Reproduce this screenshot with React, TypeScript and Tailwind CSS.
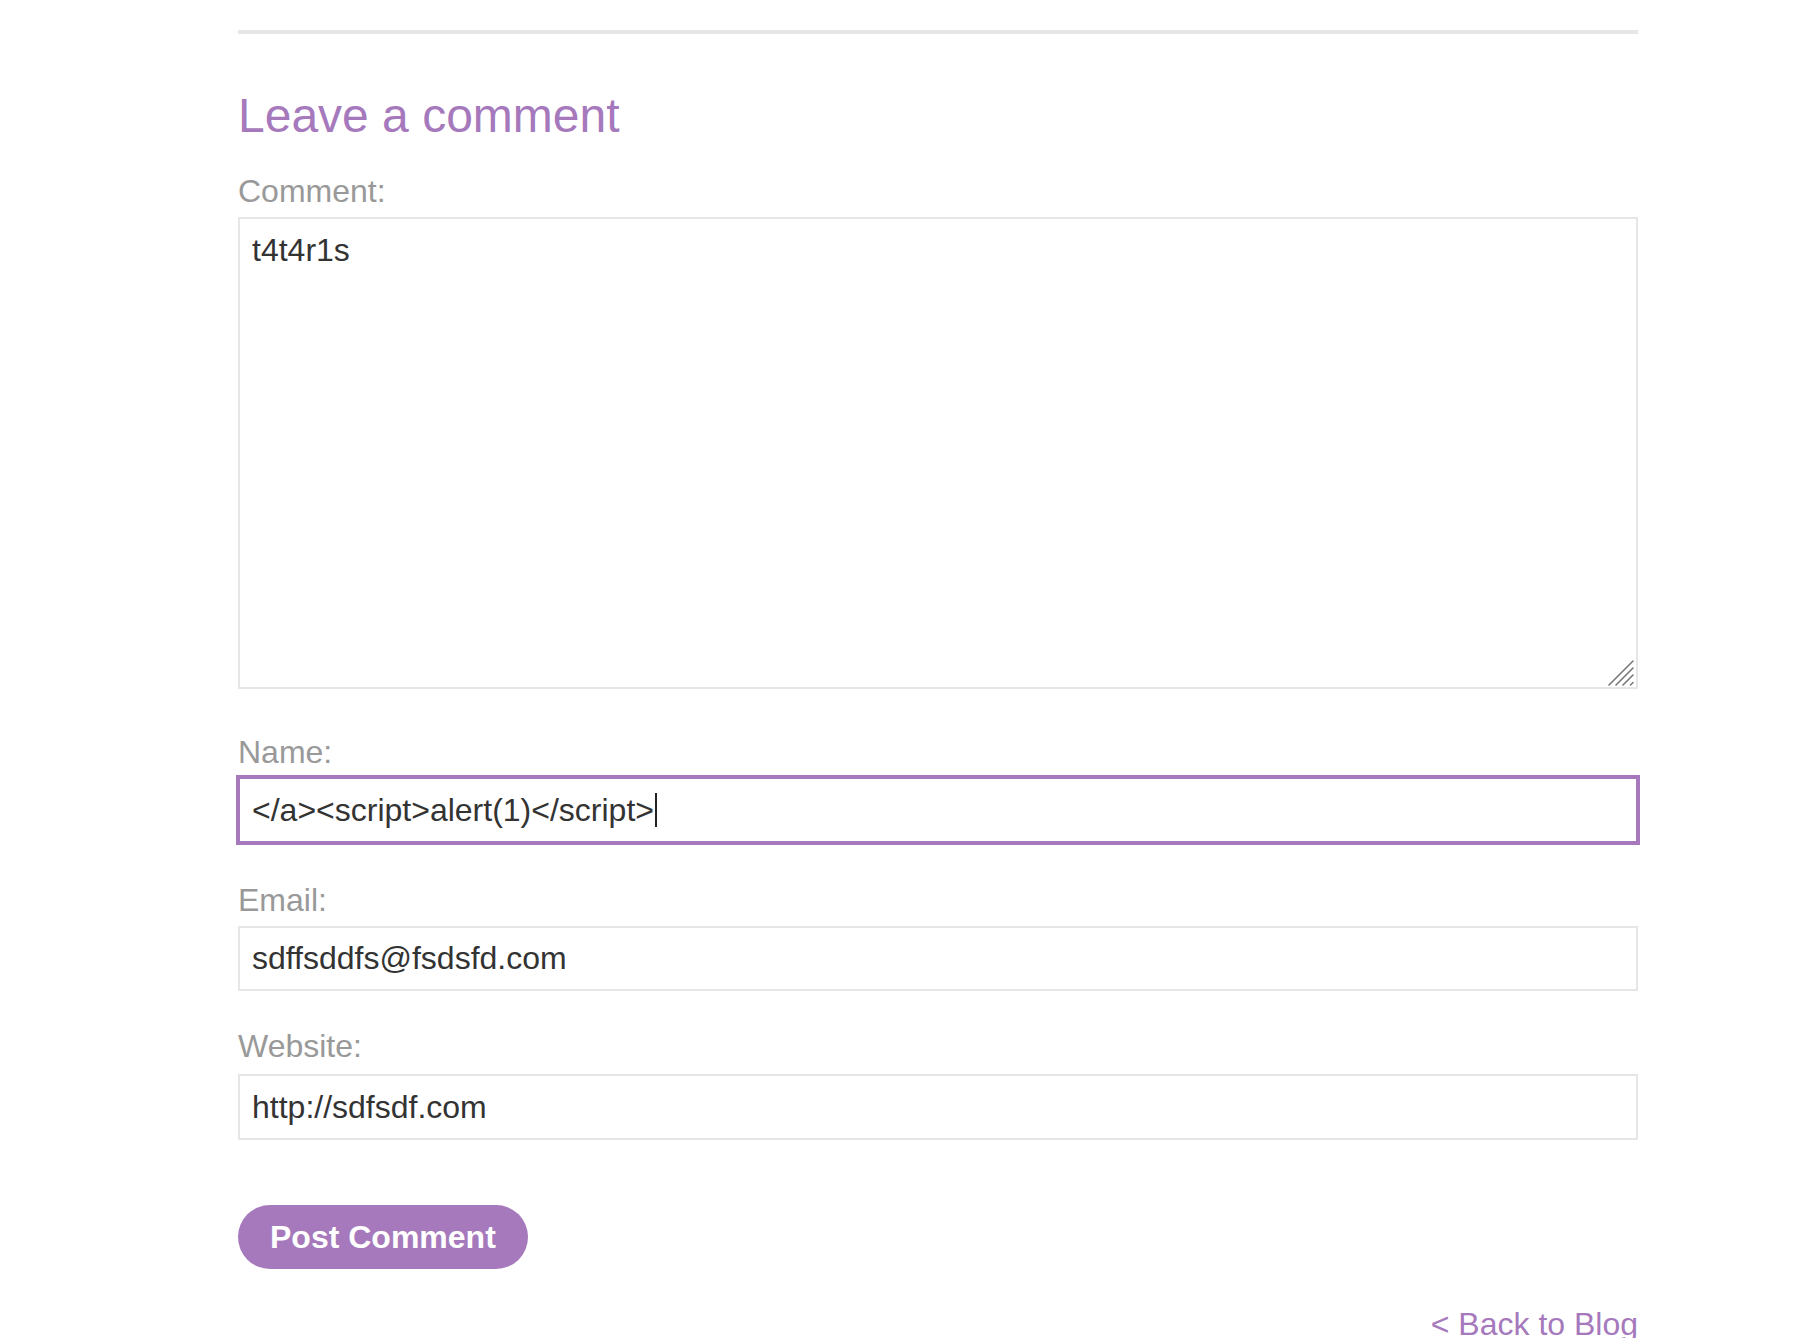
import { useState } from 'react';

const purple = '#a679bd';

// the textarea corner grip, drawn as it appears in the screenshot
function ResizeGrip() {
  return (
    <svg width="26" height="26" viewBox="0 0 26 26" className="pointer-events-none absolute right-[4px] bottom-[3px]">
      <g stroke="#777777" strokeWidth="1.6" strokeLinecap="round">
        <line x1="1" y1="25" x2="25" y2="1" />
        <line x1="8" y1="25" x2="25" y2="8" />
        <line x1="15" y1="25" x2="25" y2="15" />
        <line x1="22.5" y1="25" x2="25" y2="22.5" />
      </g>
    </svg>
  );
}

export default function App() {
  const [comment, setComment] = useState('t4t4r1s');
  const [email, setEmail] = useState('sdffsddfs@fsdsfd.com');
  const [website, setWebsite] = useState('http://sdfsdf.com');

  return (
    <div className="min-h-screen bg-white font-['Liberation_Sans',Arial,sans-serif]">
      <div className="ml-[238px] w-[1400px] pt-[30px]">
        <div className="h-[4px] bg-[#e6e6e6]" />

        <h2 className="mt-[54px] text-[48px] leading-[56px] font-normal text-[#a679bd]">Leave a comment</h2>

        <form onSubmit={(e) => e.preventDefault()}>
          <label className="mt-[27px] block text-[32px] leading-[40px] text-[#999999]">Comment:</label>
          <div className="relative mt-[6px]">
            <textarea
              value={comment}
              onChange={(e) => setComment(e.target.value)}
              className="block h-[472px] w-full resize-none border-2 border-[#e6e6e6] bg-white px-[12px] pt-[11px] text-[32px] leading-[40px] text-[#333333] outline-none"
            />
            <ResizeGrip />
          </div>

          <label className="mt-[43px] block text-[32px] leading-[40px] text-[#999999]">Name:</label>
          <div
            role="textbox"
            className="mt-[5px] flex h-[66px] w-full items-center border-2 border-[#a679bd] bg-white px-[12px] text-[32px] leading-[40px] text-[#333333] outline-2 outline-solid outline-[#a679bd]"
          >
            <span className="whitespace-pre">{'</a><script>alert(1)</script>'}</span>
            <span className="ml-[1px] inline-block h-[34px] w-[2px] bg-[#222222]" />
          </div>

          <label className="mt-[37px] block text-[32px] leading-[40px] text-[#999999]">Email:</label>
          <input
            type="text"
            value={email}
            onChange={(e) => setEmail(e.target.value)}
            className="mt-[6px] block h-[65px] w-full border-2 border-[#e6e6e6] bg-white px-[12px] text-[32px] text-[#333333] outline-none"
          />

          <label className="mt-[35px] block text-[32px] leading-[40px] text-[#999999]">Website:</label>
          <input
            type="text"
            value={website}
            onChange={(e) => setWebsite(e.target.value)}
            className="mt-[8px] block h-[66px] w-full border-2 border-[#e6e6e6] bg-white px-[12px] text-[32px] text-[#333333] outline-none"
          />

          <button
            type="submit"
            className="mt-[65px] flex h-[64px] items-center rounded-full px-[32px] text-[32px] font-bold text-white"
            style={{ backgroundColor: purple }}
          >
            Post Comment
          </button>
        </form>

        <div className="mt-[35px] flex justify-end">
          <a href="#" className="text-[32px] leading-[40px] text-[#a679bd]">
            &lt; Back to Blog
          </a>
        </div>
      </div>
    </div>
  );
}
